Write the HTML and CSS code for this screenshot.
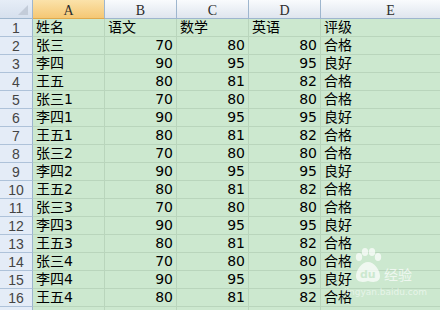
FILE: index.html
```html
<!DOCTYPE html>
<html lang="zh-CN">
<head>
    <meta charset="UTF-8">
    <title>成绩表</title>
    <link rel="stylesheet" href="styles.css">
</head>
<body>
    <div class="sheet">
        <div class="corner"><span class="tri"></span></div>
        <div class="colhead sel">A</div>
        <div class="colhead">B</div>
        <div class="colhead">C</div>
        <div class="colhead">D</div>
        <div class="colhead">E</div>

        <div class="rowhead">1</div>
        <div class="cell">姓名</div><div class="cell">语文</div><div class="cell">数学</div><div class="cell">英语</div><div class="cell">评级</div>

        <div class="rowhead">2</div>
        <div class="cell">张三</div><div class="cell num">70</div><div class="cell num">80</div><div class="cell num">80</div><div class="cell">合格</div>
        <div class="rowhead">3</div>
        <div class="cell">李四</div><div class="cell num">90</div><div class="cell num">95</div><div class="cell num">95</div><div class="cell">良好</div>
        <div class="rowhead">4</div>
        <div class="cell">王五</div><div class="cell num">80</div><div class="cell num">81</div><div class="cell num">82</div><div class="cell">合格</div>

        <div class="rowhead">5</div>
        <div class="cell">张三1</div><div class="cell num">70</div><div class="cell num">80</div><div class="cell num">80</div><div class="cell">合格</div>
        <div class="rowhead">6</div>
        <div class="cell">李四1</div><div class="cell num">90</div><div class="cell num">95</div><div class="cell num">95</div><div class="cell">良好</div>
        <div class="rowhead">7</div>
        <div class="cell">王五1</div><div class="cell num">80</div><div class="cell num">81</div><div class="cell num">82</div><div class="cell">合格</div>

        <div class="rowhead">8</div>
        <div class="cell">张三2</div><div class="cell num">70</div><div class="cell num">80</div><div class="cell num">80</div><div class="cell">合格</div>
        <div class="rowhead">9</div>
        <div class="cell">李四2</div><div class="cell num">90</div><div class="cell num">95</div><div class="cell num">95</div><div class="cell">良好</div>
        <div class="rowhead">10</div>
        <div class="cell">王五2</div><div class="cell num">80</div><div class="cell num">81</div><div class="cell num">82</div><div class="cell">合格</div>

        <div class="rowhead">11</div>
        <div class="cell">张三3</div><div class="cell num">70</div><div class="cell num">80</div><div class="cell num">80</div><div class="cell">合格</div>
        <div class="rowhead">12</div>
        <div class="cell">李四3</div><div class="cell num">90</div><div class="cell num">95</div><div class="cell num">95</div><div class="cell">良好</div>
        <div class="rowhead">13</div>
        <div class="cell">王五3</div><div class="cell num">80</div><div class="cell num">81</div><div class="cell num">82</div><div class="cell">合格</div>

        <div class="rowhead">14</div>
        <div class="cell">张三4</div><div class="cell num">70</div><div class="cell num">80</div><div class="cell num">80</div><div class="cell">合格</div>
        <div class="rowhead">15</div>
        <div class="cell">李四4</div><div class="cell num">90</div><div class="cell num">95</div><div class="cell num">95</div><div class="cell">良好</div>
        <div class="rowhead">16</div>
        <div class="cell">王五4</div><div class="cell num">80</div><div class="cell num">81</div><div class="cell num">82</div><div class="cell">合格</div>

        <!-- 17행은 아래쪽 3px만 보임 -->
        <div class="rowhead"></div>
        <div class="cell"></div><div class="cell"></div><div class="cell"></div><div class="cell"></div><div class="cell"></div>
    </div>

    <!-- 水印 -->
    <div class="watermark">
        <div class="logo">
            <svg class="paw" width="28" height="36" viewBox="0 0 28 36">
                <ellipse cx="5" cy="9" rx="3.2" ry="4"/>
                <ellipse cx="11" cy="4" rx="3.2" ry="4"/>
                <ellipse cx="18" cy="4" rx="3.2" ry="4"/>
                <ellipse cx="24" cy="9" rx="3.2" ry="4"/>
                <path d="M14 14 C 8 14, 2 22, 2 28 C 2 34, 8 35, 14 33 C 20 35, 26 34, 26 28 C 26 22, 20 14, 14 14 Z"/>
            </svg>
            <span class="du">du</span>
            <span class="jy">经验</span>
        </div>
        <div class="site">jingyan.baidu.com</div>
    </div>
</body>
</html>
```

FILE: styles.css
```css
body{
    margin: 0;
    width: 440px;
    height: 310px;
    overflow: hidden;
    background-color: #cce8cf;
    position: relative;
}
.sheet{
    display: grid;
    grid-template-columns: 33px 72px 72px 72px 72px 140px;
    grid-template-rows: 19px repeat(17, 18px);
    width: 461px;
}
.corner{
    box-sizing: border-box;
    background: linear-gradient(#e6edf7, #d6e0ee);
    border-right: 1px solid #9eb6ce;
    border-bottom: 1px solid #9eb6ce;
    display: flex;
    justify-content: flex-end;
    align-items: flex-end;
    padding: 0 4px 3px 0;
}
.tri{
    width: 10px;
    height: 10px;
    background-color: #c3ccd9;
    clip-path: polygon(100% 0, 100% 100%, 0 100%);
}
.colhead{
    box-sizing: border-box;
    background: linear-gradient(#f9fbfd, #dfe5ee);
    border-right: 1px solid #9eb6ce;
    border-bottom: 1px solid #9eb6ce;
    font-family: "Liberation Serif", serif;
    font-size: 14px;
    color: #2c2c2c;
    text-align: center;
    line-height: 21px;
}
.colhead.sel{
    background: linear-gradient(#fbe2aa, #f5c774);
    border-bottom-color: #e0a94c;
}
.rowhead{
    box-sizing: border-box;
    background-color: #e4ecf7;
    border-right: 1px solid #9eb6ce;
    border-bottom: 1px solid #aec2d9;
    font-family: "Liberation Sans", sans-serif;
    font-size: 14px;
    color: #444;
    text-align: center;
    line-height: 18px;
}
.cell{
    box-sizing: border-box;
    background-color: #cce8cf;
    border-right: 1px solid #b9d5bc;
    border-bottom: 1px solid #b9d5bc;
    font-family: "DejaVu Sans", "Noto Sans CJK SC", sans-serif;
    font-size: 14px;
    color: #000;
    line-height: 17px;
    padding-left: 3px;
    white-space: nowrap;
    overflow: hidden;
}
.num{
    text-align: right;
    padding-left: 0;
    padding-right: 3px;
}
.watermark{
    position: absolute;
    left: 344px;
    top: 248px;
    color: rgba(255, 255, 255, 0.7);
}
.logo{
    display: flex;
    align-items: flex-end;
    gap: 2px;
    padding-left: 10px;
}
.paw{
    fill: rgba(255, 255, 255, 0.7);
}
.du{
    position: absolute;
    left: 16px;
    top: 20px;
    font-family: "DejaVu Sans", sans-serif;
    font-weight: bold;
    font-size: 11px;
    color: #cce8cf;
}
.jy{
    font-family: "Noto Sans CJK SC", sans-serif;
    font-size: 14px;
    line-height: 16px;
    margin-bottom: 2px;
}
.site{
    font-family: "DejaVu Sans", sans-serif;
    font-size: 9px;
    color: rgba(255, 255, 255, 0.55);
    margin-top: 3px;
}
```
